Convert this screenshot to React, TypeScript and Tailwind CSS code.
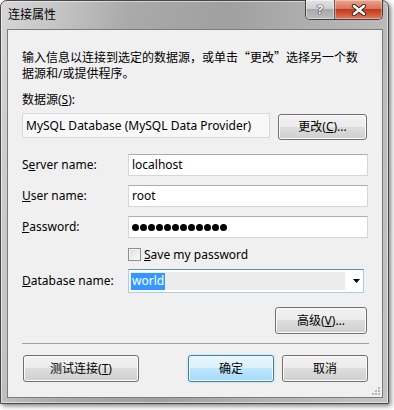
import type { ReactNode } from 'react';

const btn =
  'flex items-center justify-center rounded-[3px] border border-[#707070] bg-[linear-gradient(to_bottom,#f2f2f2_0%,#ebebeb_49%,#dddddd_50%,#cfcfcf_100%)] shadow-[inset_0_0_0_1px_#fbfbfb] text-black';
const btnDefault =
  'flex items-center justify-center rounded-[3px] border border-[#3c7fb1] bg-[linear-gradient(to_bottom,#eaf6fd_0%,#d9f0fc_49%,#bee6fd_50%,#a7d9f5_100%)] shadow-[inset_0_0_0_1px_#f4fbfe,0_0_2px_#8fd0f0] text-black';
const textbox =
  'h-[22px] w-[240px] border border-[#d2d7de] border-t-[#abadb3] bg-white pl-[3px] flex items-center';
const cjk = "font-['Noto_Sans_CJK_SC',sans-serif]";

function Btn({ children, def, className }: { children: ReactNode; def?: boolean; className: string }) {
  return <button type="button" className={`${def ? btnDefault : btn} ${className}`}>{children}</button>;
}

function Row({ label, children, className }: { label: ReactNode; children: ReactNode; className: string }) {
  return (
    <div className={`flex items-center ${className}`}>
      <div className="w-[106px]">{label}</div>
      {children}
    </div>
  );
}

function CaptionButtons() {
  return (
    <div className="-mt-px flex h-[20px] overflow-hidden rounded-b-[5px] border border-t-0 border-[#3e3e3e]">
      <div className="flex w-[29px] items-center justify-center border-r border-[#5a5a5a] bg-[linear-gradient(to_bottom,#e4e4e4_0%,#cfcfcf_45%,#a9a9a9_50%,#bcbcbc_100%)] shadow-[inset_0_0_0_1px_rgba(255,255,255,0.45)]">
        <span className="text-[13px] font-bold leading-none text-white [text-shadow:0_0_1px_#222,0_0_1px_#222,0_0_1px_#222]">?</span>
      </div>
      <div className="flex w-[47px] items-center justify-center bg-[linear-gradient(to_bottom,#eba58f_0%,#d9765c_45%,#c4391b_50%,#cf5635_75%,#e08060_100%)] shadow-[inset_0_0_0_1px_rgba(255,255,255,0.35)]">
        <svg width="16" height="12" viewBox="0 0 16 12">
          <path d="M3 2 L13 10 M13 2 L3 10" stroke="#3a2a26" strokeWidth="4.4" strokeLinecap="round" />
          <path d="M3 2 L13 10 M13 2 L3 10" stroke="#fff" strokeWidth="2.4" strokeLinecap="round" />
        </svg>
      </div>
    </div>
  );
}

export default function App() {
  return (
    <div className="min-h-screen bg-white font-['Noto_Sans','Noto_Sans_CJK_SC',sans-serif] text-[12px] leading-4 text-black">
      <div className="flex h-[404px] w-[389px] flex-col rounded-t-[7px] border border-[#474747] bg-[linear-gradient(100deg,#d6d6d6_0%,#c6c6c6_12%,#aaaaaa_28%,#a0a0a0_50%,#b2b2b2_72%,#c4c4c4_100%)] pb-[5px] pl-[6px] pr-[5px] shadow-[2px_2px_5px_rgba(0,0,0,0.5),inset_0_0_0_1px_rgba(255,255,255,0.5)]">
        <div className="flex h-[28px] items-start justify-between">
          <div className="pl-[1px] pt-[6px]">连接属性</div>
          <CaptionButtons />
        </div>

        <div className="relative flex flex-1 flex-col border border-[#7b7b7b] bg-[#f0f0f0] px-[14px] pt-[19px]">
          <div>
            <div>
              输入信息以连接到选定的数据源，或单击<span className={cjk}>“</span>更改<span className={cjk}>”</span>选择另一个数
            </div>
            <div>据源和/或提供程序。</div>
          </div>

          <div className="mt-[10px]">
            数据源(<u>S</u>):
          </div>

          <div className="mt-[5px] flex items-start gap-[8px]">
            <div className="flex h-[25px] w-[248px] items-center border border-[#dadada] bg-[#f8f8f8] pl-[3px]">
              MySQL Database (MySQL Data Provider)
            </div>
            <Btn className="mt-[1px] h-[26px] w-[89px]">
              更改(<u>C</u>)...
            </Btn>
          </div>

          <Row className="mt-[14px]" label={<>S<u>e</u>rver name:</>}>
            <div className={textbox}>localhost</div>
          </Row>
          <Row className="mt-[9px]" label={<><u>U</u>ser name:</>}>
            <div className={textbox}>root</div>
          </Row>
          <Row className="mt-[9px]" label={<><u>P</u>assword:</>}>
            <div className={`${textbox} gap-[1px]`}>
              {Array.from({ length: 12 }).map((_, i) => (
                <span key={i} className="h-[7px] w-[7px] rounded-full bg-black" />
              ))}
            </div>
          </Row>

          <div className="mt-[10px] flex h-[13px] items-center pl-[106px]">
            <span className="h-[13px] w-[13px] border border-[#8f8f8f] bg-[linear-gradient(135deg,#dcdcdc,#fbfbfb)] shadow-[inset_0_0_0_1px_#f4f4f4]" />
            <span className="ml-[3px]">
              <u>S</u>ave my password
            </span>
          </div>

          <Row className="mt-[8px]" label={<><u>D</u>atabase name:</>}>
            <div className="flex h-[24px] w-[236px] items-center border border-[#a9cde9] border-t-[#5b8fc4] bg-white pl-px">
              <div className="flex h-[18px] w-[215px] items-center bg-[#ececec] pl-px">
                <span className="flex h-[17px] items-center bg-[#3399ff] px-[1px] text-white">world</span>
              </div>
              <svg className="ml-[8px]" width="7" height="4" viewBox="0 0 7 4">
                <path d="M0 0 H7 L3.5 4 Z" fill="#000" />
              </svg>
            </div>
          </Row>

          <div className="mt-[14px] flex justify-end pr-[1px]">
            <Btn className="h-[27px] w-[92px]">
              高级(<u>V</u>)...
            </Btn>
          </div>

          <div className="mt-[9px] h-px w-[347px] bg-[#a0a0a0]" />

          <div className="mt-[11px] flex">
            <Btn className="ml-[1px] h-[27px] w-[116px]">
              测试连接(<u>T</u>)
            </Btn>
            <Btn def className="ml-auto h-[27px] w-[86px]">
              确定
            </Btn>
            <Btn className="ml-[8px] h-[27px] w-[86px]">取消</Btn>
          </div>

          <svg className="absolute bottom-[1px] right-[1px]" width="10" height="10" viewBox="0 0 10 10">
            <g fill="#b5b5b5">
              <rect x="7" y="1" width="2" height="2" />
              <rect x="4" y="4" width="2" height="2" />
              <rect x="7" y="4" width="2" height="2" />
              <rect x="1" y="7" width="2" height="2" />
              <rect x="4" y="7" width="2" height="2" />
              <rect x="7" y="7" width="2" height="2" />
            </g>
          </svg>
        </div>
      </div>
    </div>
  );
}
